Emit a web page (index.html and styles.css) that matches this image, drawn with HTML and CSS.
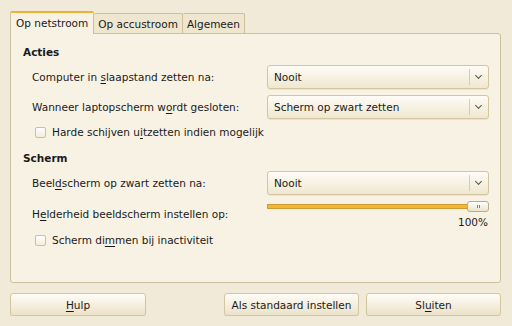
FILE: index.html
```html
<!DOCTYPE html>
<html lang="nl">

<head>
    <meta charset="UTF-8">
    <title>Energiebeheer voorkeuren</title>
    <link rel="stylesheet" href="styles.css">
</head>

<body>

    <div class="window">

        <!-- Tabs -->
        <div class="tabs">
            <div class="tab active">Op netstroom</div>
            <div class="tab">Op accustroom</div>
            <div class="tab">Algemeen</div>
        </div>

        <div class="panel">

            <h3>Acties</h3>
            <div class="row">
                <span class="label">Computer in <u>s</u>laapstand zetten na:</span>
                <div class="combo"><span class="value">Nooit</span><span class="sep"></span><span class="arrow"></span></div>
            </div>
            <div class="row">
                <span class="label">Wanneer laptopscherm w<u>o</u>rdt gesloten:</span>
                <div class="combo"><span class="value">Scherm op zwart zetten</span><span class="sep"></span><span class="arrow"></span></div>
            </div>
            <div class="check-row">
                <span class="checkbox"></span>
                <span>Harde schijven u<u>i</u>tzetten indien mogelijk</span>
            </div>

            <h3 class="second">Scherm</h3>
            <div class="row">
                <span class="label">Beel<u>d</u>scherm op zwart zetten na:</span>
                <div class="combo"><span class="value">Nooit</span><span class="sep"></span><span class="arrow"></span></div>
            </div>
            <div class="row slider-row">
                <span class="label">H<u>e</u>lderheid beeldscherm instellen op:</span>
                <div class="slider-box">
                    <div class="slider">
                        <div class="track"></div>
                        <div class="thumb"><span></span><span></span></div>
                    </div>
                    <div class="percent">100%</div>
                </div>
            </div>
            <div class="check-row">
                <span class="checkbox"></span>
                <span>Scherm di<u>m</u>men bij inactiviteit</span>
            </div>

        </div>

        <!-- Dialog buttons -->
        <div class="buttons">
            <button class="btn help"><u>H</u>ulp</button>
            <div class="spacer"></div>
            <button class="btn">Als standaard instellen</button>
            <button class="btn">Sl<u>u</u>iten</button>
        </div>

    </div>

</body>

</html>
```

FILE: styles.css
```css
body {
    margin: 0;
    background-color: #f2ead9;
    font-family: 'DejaVu Sans', sans-serif;
    font-size: 10.5px;
    color: #1a1a1a;
    white-space: nowrap;
}

u {
    text-decoration-thickness: 1px;
    text-underline-offset: 2px;
}

.window {
    padding: 11px 11px 0 10px;
}

/* Tabs */
.tabs {
    display: flex;
    align-items: flex-end;
    height: 22px;
    position: relative;
    z-index: 1;
}

.tab {
    height: 19px;
    line-height: 21px;
    padding: 0 4px;
    background-color: #efe6cf;
    border: 1px solid #cdbf9b;
    border-bottom: none;
    border-left: none;
    border-radius: 2px 2px 0 0;
}

.tab.active {
    height: 21px;
    line-height: 21px;
    background-color: #f8f2e5;
    border-left: 1px solid #cdbf9b;
    border-top: 2px solid #f0b030;
    padding: 0 5px;
    margin-bottom: -1px;
}

/* Main panel */
.panel {
    height: 250px;
    box-sizing: border-box;
    background-color: #f8f2e5;
    border: 1px solid #cdbf9b;
    border-radius: 0 3px 3px 3px;
    padding: 10px 11px 0 12px;
}

h3 {
    margin: 0 0 2px 0;
    font-size: 10.5px;
    font-weight: bold;
    height: 16px;
    line-height: 16px;
}

h3.second {
    margin-top: 8px;
}

.row {
    display: flex;
    align-items: center;
    height: 30px;
    margin-left: 9px;
}

.label {
    width: 235px;
    flex-shrink: 0;
}

.combo {
    width: 222px;
    height: 24px;
    box-sizing: border-box;
    display: flex;
    align-items: center;
    border: 1px solid #d3c59f;
    border-radius: 3px;
    background: linear-gradient(#fefcf7, #f0e7cf);
    box-shadow: 0 1px 0 rgba(160, 140, 100, 0.15);
}

.combo .value {
    flex: 1;
    padding-left: 6px;
}

.combo .sep {
    width: 1px;
    height: 16px;
    background-color: #d8ccae;
}

.combo .arrow {
    width: 4px;
    height: 4px;
    border-right: 1px solid #555;
    border-bottom: 1px solid #555;
    transform: rotate(45deg);
    margin: 0 7px 3px 6px;
}

.check-row {
    display: flex;
    align-items: center;
    height: 20px;
    margin-left: 12px;
    gap: 6px;
}

.checkbox {
    width: 9px;
    height: 9px;
    border: 1px solid #cdbf9b;
    border-radius: 2px;
    background: linear-gradient(#ffffff, #f3ecdc);
}

/* Brightness slider */
.slider-row {
    height: 32px;
}

.slider-box {
    width: 222px;
    padding-top: 1px;
}

.slider {
    display: flex;
    align-items: center;
    height: 11px;
}

.track {
    flex: 1;
    height: 3px;
    background-color: #f3b82e;
    border: 1px solid #d19a35;
    border-right: none;
}

.thumb {
    width: 20px;
    height: 9px;
    border: 1px solid #b9ab88;
    border-radius: 3px;
    background: linear-gradient(#ffffff, #ece3cb);
    display: flex;
    justify-content: center;
    align-items: center;
    gap: 1px;
}

.thumb span {
    width: 1px;
    height: 3px;
    background-color: #8d8269;
}

.percent {
    text-align: right;
    margin-top: 3px;
    line-height: 14px;
    padding-right: 1px;
}

/* Buttons */
.buttons {
    display: flex;
    margin-top: 10px;
    gap: 7px;
}

.spacer {
    flex: 1;
}

.btn {
    width: 135px;
    height: 23px;
    font-family: 'DejaVu Sans', sans-serif;
    font-size: 10.5px;
    color: #1a1a1a;
    border: 1px solid #d3c59f;
    border-radius: 3px;
    background: linear-gradient(#fefcf7, #ece2c8);
    box-shadow: 0 1px 0 rgba(160, 140, 100, 0.2);
    padding: 0;
}

.btn.help {
    width: 136px;
}
```
